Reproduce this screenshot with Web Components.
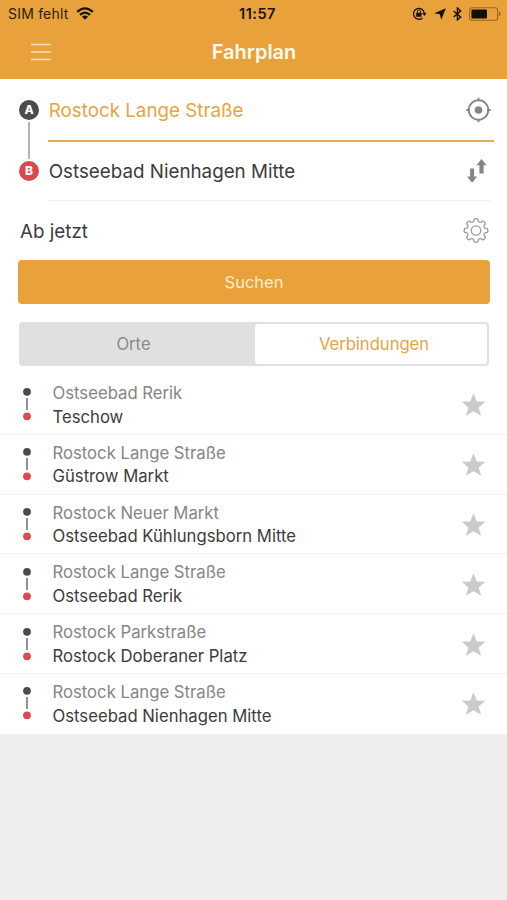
<!DOCTYPE html>
<html lang="de">
<head>
<meta charset="utf-8">
<meta name="viewport" content="width=device-width, initial-scale=1">
<title>Fahrplan</title>
<style>
    body {
        margin: 0;
        background: #eeeeee;
        color: #3c3c3c;
        font-family: Inter, "Liberation Sans", sans-serif;
    }
</style>
</head>
<body>
<fp-app></fp-app>

<script>
class FpStatusBar extends HTMLElement {
    constructor() {
        super();
        this.attachShadow({ mode: 'open' });
        this.shadowRoot.innerHTML = `
            <style>
                :host {
                    display: grid;
                    grid-template-columns: 1fr auto 1fr;
                    align-items: center;
                    height: 27px;
                    padding: 0 6px 0 8px;
                    background: #e9a23b;
                    color: #2a1c08;
                    font-size: 14px;
                }
                .carrier, .icons { display: flex; align-items: center; }
                .carrier { letter-spacing: 0.2px; }
                .carrier svg { margin-left: 7px; }
                .time { font-size: 14.5px; font-weight: 600; letter-spacing: 0.5px; margin-left: 6px; color: #1a1206; }
                .icons { justify-content: flex-end; }
                svg { display: block; }
            </style>
            <div class="carrier">
                <span>SIM fehlt</span>
                <svg width="18" height="13" viewBox="0 0 18 13" fill="none" stroke="#1a1206" stroke-width="2.3">
                    <path d="M1.2 4.9Q9-2.2 16.8 4.9M4 7.9Q9 3.4 14 7.9"/>
                    <path d="M6 9.8Q9 7.2 12 9.8L9 12.8Z" fill="#1a1206" stroke="none"/>
                </svg>
            </div>
            <div class="time">11:57</div>
            <div class="icons">
                <svg width="15" height="14" viewBox="0 0 15 14">
                    <path d="M10.5 10.9A5.4 5.4 0 1 1 12.3 6.4" fill="none" stroke="#1a1206" stroke-width="1.3"/>
                    <path d="M10.2 6h4.4l-2.2 3z" fill="#1a1206"/>
                    <rect x="4.2" y="5.8" width="5.4" height="4" rx=".5" fill="#1a1206"/>
                    <path d="M5.3 6V4.6a1.6 1.6 0 0 1 3.2 0V6" fill="none" stroke="#1a1206"/>
                </svg>
                <svg width="12" height="12" viewBox="0 0 12 12" style="margin-left:7px">
                    <path d="M11.9.2L7.2 11.8 5.9 6.3.2 5.3z" fill="#1a1206"/>
                </svg>
                <svg width="9" height="14" viewBox="0 0 9 14" style="margin-left:7px">
                    <path d="M.7 4l7 6.1-3.3 2.9V1l3.3 2.9-7 6.1" fill="none" stroke="#1a1206" stroke-width="1.4"/>
                </svg>
                <svg width="32" height="14" viewBox="0 0 32 14" style="margin-left:7px">
                    <rect x=".6" y=".7" width="28" height="12.6" rx="2.6" fill="none" stroke="#97691f" stroke-width="1.1"/>
                    <rect x="2.4" y="2.5" width="15.6" height="9" rx="1" fill="#140d04"/>
                    <path d="M30 4.8q1.7.6 1.7 2.2T30 9.2z" fill="#97691f"/>
                </svg>
            </div>
        `;
    }
}

class FpNavBar extends HTMLElement {
    constructor() {
        super();
        this.attachShadow({ mode: 'open' });
        this.shadowRoot.innerHTML = `
            <style>
                :host {
                    display: grid;
                    grid-template-columns: 1fr auto 1fr;
                    align-items: center;
                    height: 52px;
                    padding: 0 30px 0 31px;
                    background: #e9a23b;
                    color: #fffaf0;
                }
                .title { font-size: 20px; font-weight: 600; margin-top: -2px; }
                svg { display: block; margin-top: -3px; }
            </style>
            <svg width="20" height="18" viewBox="0 0 20 18" stroke="#fbe3bb" stroke-width="1.6">
                <path d="M0 1.5h20M0 9h20M0 16.5h20"/>
            </svg>
            <div class="title"><slot></slot></div>
        `;
    }
}

// outline of an eight-toothed gear centred on 0,0
function gearPath() {
    const teeth = 8;
    const profile = [[-0.5, 8.9], [-0.33, 9.3], [-0.2, 11.6], [0, 12], [0.2, 11.6], [0.33, 9.3]];
    let d = '';
    for (let i = 0; i < teeth; i++) {
        for (const [offset, radius] of profile) {
            const a = (i + offset) * 2 * Math.PI / teeth;
            const x = (radius * Math.sin(a)).toFixed(2);
            const y = (-radius * Math.cos(a)).toFixed(2);
            d += (d ? 'L' : 'M') + x + ' ' + y;
        }
    }
    return d + 'Z';
}

class FpSearchForm extends HTMLElement {
    constructor() {
        super();
        this.attachShadow({ mode: 'open' });
        this.shadowRoot.innerHTML = `
            <style>
                :host { display: block; background: #fff; padding-top: 1px; }
                .stops { display: grid; grid-template-columns: 29px 1fr; padding-left: 19px; }
                .track {
                    display: flex;
                    flex-direction: column;
                    align-items: center;
                    width: 20px;
                    padding-top: 20px;
                }
                .badge {
                    width: 20px;
                    height: 20px;
                    border-radius: 50%;
                    background: #4b4b4b;
                    color: #fff;
                    font-size: 12px;
                    font-weight: 800;
                    line-height: 20px;
                    text-align: center;
                }
                .badge.b { background: #d8494f; }
                .rail { width: 1.5px; height: 37px; margin: 2px 0; background: #b5b5b5; }
                .field {
                    display: flex;
                    align-items: center;
                    justify-content: space-between;
                    box-sizing: border-box;
                    font-size: 18.8px;
                }
                .stops span { padding: 2px 0 0 0.7px; }
                .from { height: 61.5px; margin-right: 13px; padding-right: 3px; border-bottom: 2px solid #e8a94f; color: #e6a445; }
                .to { height: 59.5px; margin-right: 16px; padding-right: 4.5px; border-bottom: 1px solid #f0f0f0; }
                .when { height: 59px; padding: 0 18px 0 20px; }
                .when span { padding-top: 1px; }
                svg { display: block; }
                button {
                    display: block;
                    width: 472px;
                    height: 44px;
                    margin: 0 0 0 18px;
                    padding: 0;
                    border: 0;
                    border-radius: 4px;
                    background: #e9a23b;
                    color: #fdeccd;
                    font: 16.5px Inter, "Liberation Sans", sans-serif;
                }
            </style>
            <div class="stops">
                <div class="track">
                    <div class="badge">A</div>
                    <div class="rail"></div>
                    <div class="badge b">B</div>
                </div>
                <div>
                    <div class="field from">
                        <span>Rostock Lange Straße</span>
                        <svg width="26" height="26" viewBox="0 0 26 26" fill="none" stroke="#858585" stroke-width="1.8">
                            <circle cx="13.5" cy="13" r="9.8"/>
                            <circle cx="13.5" cy="13" r="3.8" fill="#858585" stroke="none"/>
                            <path d="M13.5.8v3.4M13.5 21.8v3.4M1.3 13h3.4M22.3 13h3.4"/>
                        </svg>
                    </div>
                    <div class="field to">
                        <span>Ostseebad Nienhagen Mitte</span>
                        <svg width="20" height="24" viewBox="0 0 20 24" fill="#858585">
                            <path d="M3.1 9.4h4v8.2h3.1L5.1 23.8 0 17.6h3.1zM12.4 14.4h4.2V6.3h3.1L14.5 0 9.4 6.3h3z"/>
                        </svg>
                    </div>
                </div>
            </div>
            <div class="field when">
                <span>Ab jetzt</span>
                <svg width="26" height="26" viewBox="-13 -12.5 26 26" fill="none" stroke="#9c9c9c" stroke-width="1.3" stroke-linejoin="round">
                    <path d="${gearPath()}"/>
                    <circle r="4.7"/>
                </svg>
            </div>
            <button>Suchen</button>
        `;
    }
}

class FpTabs extends HTMLElement {
    constructor() {
        super();
        this.attachShadow({ mode: 'open' });
        this.shadowRoot.innerHTML = `
            <style>
                :host { display: block; background: #fff; padding: 18px 18px 9px 19px; }
                .tabs {
                    display: grid;
                    grid-template-columns: 234px 1fr;
                    box-sizing: border-box;
                    height: 44px;
                    border: 2px solid #e0e0e0;
                    border-radius: 4px;
                    background: #e0e0e0;
                    font-size: 16.6px;
                    line-height: 40px;
                    text-align: center;
                }
                .left { color: #8b8b8b; padding-right: 9px; }
                .right { background: #fff; border-radius: 3px; color: #e6a445; padding-left: 6px; }
            </style>
            <div class="tabs">
                <div class="left"><slot name="left"></slot></div>
                <div class="right"><slot name="right"></slot></div>
            </div>
        `;
    }
}

class FpConnection extends HTMLElement {
    constructor() {
        super();
        this.attachShadow({ mode: 'open' });
        this.shadowRoot.innerHTML = `
            <style>
                :host {
                    display: grid;
                    grid-template-columns: 30px 1fr auto;
                    align-items: center;
                    box-sizing: border-box;
                    height: 59.8px;
                    padding: 0 21px 0 22.5px;
                    border-bottom: 1px solid #f0f0f0;
                    background: #fff;
                    font-size: 16.7px;
                    line-height: 23.7px;
                }
                :host(:last-of-type) { border-bottom-color: #fff; }
                .stops { padding-top: 2.5px; }
                .from { color: #858585; }
                svg { display: block; }
                .star { margin-top: 2px; }
            </style>
            <svg width="8" height="34" viewBox="0 0 8 34">
                <circle cx="4" cy="4.8" r="3.9" fill="#4b4b4b"/>
                <path d="M4 11v12" stroke="#858585" stroke-width="1.8"/>
                <circle cx="4" cy="29.3" r="3.9" fill="#dc4a4d"/>
            </svg>
            <div class="stops">
                <div class="from"><slot name="from"></slot></div>
                <div><slot name="to"></slot></div>
            </div>
            <svg class="star" width="25" height="24" viewBox="0 0 25 24" fill="#cbcbcb">
                <path d="M12.5.3l3.3 8.1 8.5.4-6.6 5.6 2.4 8.4-7.6-4.6-7.6 4.6 2.4-8.4L.7 8.8l8.5-.4z"/>
            </svg>
        `;
    }
}

class FpApp extends HTMLElement {
    constructor() {
        super();
        this.attachShadow({ mode: 'open' });
        const connections = [
            ['Ostseebad Rerik', 'Teschow'],
            ['Rostock Lange Straße', 'Güstrow Markt'],
            ['Rostock Neuer Markt', 'Ostseebad Kühlungsborn Mitte'],
            ['Rostock Lange Straße', 'Ostseebad Rerik'],
            ['Rostock Parkstraße', 'Rostock Doberaner Platz'],
            ['Rostock Lange Straße', 'Ostseebad Nienhagen Mitte']
        ];
        this.shadowRoot.innerHTML = `
            <style>
                :host { display: block; width: 507px; min-height: 900px; background: #eeeeee; }
            </style>
            <fp-status-bar></fp-status-bar>
            <fp-nav-bar>Fahrplan</fp-nav-bar>
            <fp-search-form></fp-search-form>
            <fp-tabs>
                <span slot="left">Orte</span>
                <span slot="right">Verbindungen</span>
            </fp-tabs>
            ${connections.map(([from, to]) => `
                <fp-connection>
                    <span slot="from">${from}</span>
                    <span slot="to">${to}</span>
                </fp-connection>
            `).join('')}
        `;
    }
}

customElements.define('fp-status-bar', FpStatusBar);
customElements.define('fp-nav-bar', FpNavBar);
customElements.define('fp-search-form', FpSearchForm);
customElements.define('fp-tabs', FpTabs);
customElements.define('fp-connection', FpConnection);
customElements.define('fp-app', FpApp);
</script>
</body>
</html>
